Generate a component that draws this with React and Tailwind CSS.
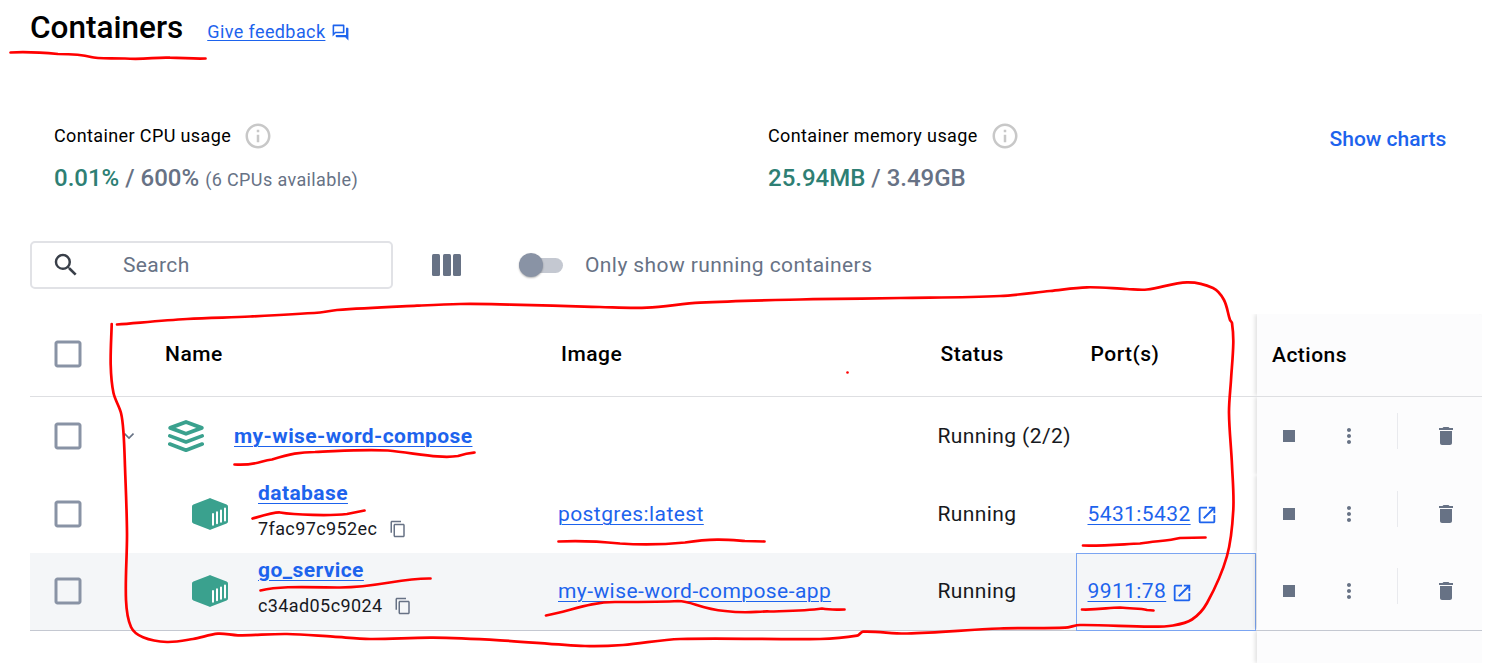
import React from "react";
import {
  MdSearch,
  MdOutlineQuestionAnswer,
  MdInfoOutline,
  MdOpenInNew,
  MdDelete,
  MdMoreVert,
  MdStop,
  MdContentCopy,
  MdCheckBoxOutlineBlank,
} from "react-icons/md";

function ComposeIcon() {
  return (
    <svg className="h-9 w-9 shrink-0" viewBox="0 0 36 36" fill="none" stroke="#3aa18e" strokeWidth="3.6" strokeLinejoin="round" strokeLinecap="round">
      <path d="M18 4 L33.800 9.900 L18 15.800 L2.200 9.900 Z" strokeWidth="3.800" />
      <path d="M1.800 17.900 L18 24 L34.200 17.900" />
      <path d="M1.800 26 L18 32.200 L34.200 26" />
    </svg>
  );
}

function ContainerIcon() {
  return (
    <svg className="h-9 w-9 shrink-0" viewBox="0 0 36 36">
      <path d="M17 2.4 Q18 1.8 19 2.4 L34.6 8.6 Q36 9.2 36 10.6 V25.4 Q36 26.8 34.6 27.4 L19 33.6 Q18 34.2 17 33.6 L1.4 27.4 Q0 26.8 0 25.4 V10.6 Q0 9.2 1.4 8.6 Z" fill="#3aa18e" />
      <path d="M21 18 V28.7 M25 16.2 V27.2 M29 14.4 V25.8 M33 12.6 V24.4" stroke="#fff" strokeWidth="2" strokeLinecap="round" />
    </svg>
  );
}

function Checkbox() {
  return (
    <div className="flex w-[76px] shrink-0 justify-center text-[#8993a5]">
      <MdCheckBoxOutlineBlank size={36} />
    </div>
  );
}

function Actions() {
  return (
    <div className="flex h-full w-[225px] shrink-0 items-center bg-[#fcfcfd] text-[#677285] shadow-[-2px_0_4px_rgba(0,0,0,0.12)] [clip-path:inset(0_0_0_-8px)]">
      <MdStop size={24} className="ml-5" />
      <MdMoreVert size={24} className="ml-9" />
      <div className="-mt-[11px] ml-9 h-9 w-px bg-[#e9eaee]" />
      <MdDelete size={24} className="ml-9" />
    </div>
  );
}

function ServiceRow({ name, id, image, port, active }) {
  return (
    <div className={active ? "flex h-[78px] items-center border-b border-[#c4c8d1] bg-[#f4f6f8]" : "flex h-[78px] items-center"}>
      <div className={active ? "flex flex-1 items-center pb-px" : "flex flex-1 items-center"}>
        <Checkbox />
        <div className="flex w-[452px] items-center pl-[86px]">
          <ContainerIcon />
          <div className="ml-[30px] pb-[7px]">
            <a className="block text-[21px] leading-[36px] font-bold tracking-[0.42px] text-[#1d63ed] underline decoration-1 underline-offset-[3px]">{name}</a>
            <div className="flex h-9 items-center text-[18px] tracking-[0.4px] text-[#17191e]">
              {id}
              <MdContentCopy size={18} className="ml-[11.500px] text-[#677285]" />
            </div>
          </div>
        </div>
        <div className="w-[379.500px] pt-[2px]">
          <a className="text-[21px] tracking-[0.42px] text-[#1d63ed] underline decoration-1 underline-offset-[3px]">{image}</a>
        </div>
        <div className="pt-[2px] text-[21px] tracking-[0.4px] text-[#17191e]">Running</div>
      </div>
      <div className={active ? "flex h-[78px] w-[180px] items-center border border-[#7ba5f2] pl-[10.500px]" : "flex w-[180px] items-center pl-[11.500px]"}>
        <a className={active ? "pt-px text-[21px] tracking-[0.4px] text-[#1d63ed] underline decoration-1 underline-offset-[3px]" : "pt-[2px] text-[21px] tracking-[0.4px] text-[#1d63ed] underline decoration-1 underline-offset-[3px]"}>{port}</a>
        <MdOpenInNew size={22} className="mt-[2px] ml-[5px] text-[#1d63ed]" />
      </div>
      <div className={active ? "ml-px h-full bg-[#fcfcfd] pb-px" : "ml-px h-full"}>
        <Actions />
      </div>
    </div>
  );
}

const OUTLINE = [
  [117, 324.5], [187, 319], [250, 316.5], [320, 312.5], [337, 310], [417, 305.7], [460, 304], [500, 304.3],
  [600, 307], [647, 307.6], [700, 302.7], [800, 299.500], [900, 298], [1000, 296], [1050, 291], [1087, 287.3], [1127, 289],
  [1147, 289.5], [1187, 282.3], [1213, 288], [1224, 300], [1230, 320], [1232, 323], [1233.3, 343], [1231, 380],
  [1229, 413], [1232, 465], [1233.3, 510], [1227, 556], [1207, 603], [1192, 619.5], [1173, 625.5], [1150, 626.7],
  [1080, 625], [1065, 627.7], [1000, 628.5], [907, 633.5], [863, 631.7], [857, 635.7], [820, 639], [680, 639],
  [623, 645], [585, 646], [500, 640.3], [433, 637.7], [370, 639], [333, 636.7], [287, 634], [238, 635.3],
  [218, 633.7], [193, 639], [167, 642], [143, 637.3], [131, 627], [126, 600], [127, 533], [125, 467],
  [123.5, 433], [121, 413], [113.5, 393], [110.7, 365], [111.7, 324],
];

// Catmull-Rom spline through the points, written as cubic segments.
function smoothPath(points) {
  let d = `M${points[0][0]} ${points[0][1]}`;
  for (let i = 0; i < points.length - 1; i++) {
    const p0 = points[i - 1] || points[i];
    const p1 = points[i];
    const p2 = points[i + 1];
    const p3 = points[i + 2] || p2;
    const span = Math.hypot(p2[0] - p1[0], p2[1] - p1[1]);
    const control = (from, to, at, sign) => {
      const len = Math.hypot(to[0] - from[0], to[1] - from[1]) || 1;
      return [at[0] + (sign * span * (to[0] - from[0])) / len / 3, at[1] + (sign * span * (to[1] - from[1])) / len / 3];
    };
    const a = control(p0, p2, p1, 1);
    const b = control(p1, p3, p2, -1);
    d += ` C${a[0]} ${a[1]} ${b[0]} ${b[1]} ${p2[0]} ${p2[1]}`;
  }
  return d;
}

function Annotations() {
  return (
    <svg className="pointer-events-none absolute inset-0" width="1500" height="663" viewBox="0 0 1500 663" fill="none" stroke="#ff0000" strokeWidth="2.7" strokeLinecap="round" strokeLinejoin="round">
      <path d="M10.500 52.500 C30 51.500 42 52.500 58 54 C72 54 84 55 91 57 C97 59 110 58 125 58.500 C145 60 155 57 170 57.700 C185 58 195 59 205.500 58.500" />
      <path d={smoothPath(OUTLINE)} />
      <path d="M234.500 464.500 C255 466 260 461 272 459.500 C290 454 300 452 315 452 C335 451.500 360 449 388 450.500 C415 453 440 459 458 456 C467 453 468 453 474.500 452.500" />
      <path d="M252.500 518.500 C265 515 275 512 280 512.500 C295 515 330 516 347 514 L364.500 510.500" />
      <path d="M260.500 590.500 C280 586 300 587 340 587.500 C380 587 400 578 430.500 578.500" />
      <path d="M558.500 541.500 C585 540 605 542 620 543.500 C640 545 665 544.500 685 542.500 C715 538 730 540 745 541 L764.500 541.500" />
      <path d="M546 615.500 C570 611 590 602 615 602 C640 602 665 602 678 601 C692 601 700 609 725 611 C750 614 755 611 770 611.500 C785 611 805 611 822 608.500 C830 610 835 609.500 844.500 609.500" />
      <path d="M1083 545.500 C1105 546 1125 544 1140 543.500 C1155 541 1168 541 1180 538 L1205.500 537.500" />
      <path d="M1082 609.500 C1100 610 1108 607.500 1120 607.500 C1132 609 1140 608 1147 610 L1153.500 610.500" />
      <circle cx="847.500" cy="372.500" r="1.300" fill="#ff0000" stroke="none" />
    </svg>
  );
}

export default function App() {
  return (
    <div className="relative h-[663px] w-[1500px] overflow-hidden bg-white font-['Roboto',sans-serif] text-black">
      <header className="flex h-[60px] items-start pl-[30px]">
        <h1 className="mt-[7px] text-[31.5px] leading-[42px] font-medium">Containers</h1>
        <a className="mt-[18px] ml-6 text-[18px] leading-[27px] tracking-[0.4px] text-[#1d63ed] underline decoration-1 underline-offset-[2px]">Give feedback</a>
        <MdOutlineQuestionAnswer size={19} className="mt-[23px] ml-[5.500px] text-[#1d63ed]" />
      </header>

      <section className="flex h-[181px] pt-[60px] pl-[54px]">
        <div className="w-[714px]">
          <div className="flex h-8 items-center text-[18px] tracking-[0.38px]">
            <span className="pb-[2px]">Container CPU usage</span>
            <MdInfoOutline size={30} className="ml-3 text-[#c8c8c8]" />
          </div>
          <div className="mt-2 flex h-[34px] items-baseline text-[24px] font-medium text-[#677285]">
            <span className="text-[#2e7f74]">0.01%</span>
            <span className="whitespace-pre"> / 600% </span>
            <span className="text-[18px] font-normal tracking-[0.38px]">(6 CPUs available)</span>
          </div>
        </div>
        <div className="w-[561.5px]">
          <div className="flex h-8 items-center text-[18px] tracking-[0.38px]">
            <span className="pb-[2px]">Container memory usage</span>
            <MdInfoOutline size={30} className="ml-3 text-[#c8c8c8]" />
          </div>
          <div className="mt-2 flex h-[34px] items-baseline text-[24px] font-medium text-[#677285]">
            <span className="text-[#2e7f74]">25.94MB</span>
            <span className="whitespace-pre"> / 3.49GB</span>
          </div>
        </div>
        <button className="mt-1 h-[30px] text-[21px] leading-[30px] font-medium whitespace-nowrap text-[#1d63ed]">Show charts</button>
      </section>

      <section className="flex h-12 items-center pl-[30px] text-[21px] text-[#677285]">
        <div className="flex h-12 w-[363px] items-center rounded-[5px] border-2 border-[#e1e2e6] pl-[19px]">
          <MdSearch size={30} className="text-[#393f49]" />
          <span className="ml-[42px] pt-[2px] tracking-[0.35px]">Search</span>
        </div>
        <div className="ml-[39px] flex h-[22px] w-[29px] justify-between">
          <div className="w-2 rounded-[1.5px] bg-[#677285]" />
          <div className="w-2 rounded-[1.5px] bg-[#677285]" />
          <div className="w-2 rounded-[1.5px] bg-[#677285]" />
        </div>
        <div className="ml-[58px] flex h-[15px] w-[44px] items-center rounded-full bg-[#c4c8d1]">
          <div className="h-6 w-6 shrink-0 rounded-full bg-[#8993a5] shadow-[0_1px_2px_rgba(0,0,0,0.3)]" />
        </div>
        <span className="ml-[22px] pt-[2px] tracking-[0.41px]">Only show running containers</span>
      </section>

      <section className="mt-[25px] ml-[30px] w-[1452px]">
        <div className="flex h-[83px] items-center border-b border-[#dedfe2] text-[21px] font-medium tracking-[0.48px]">
          <div className="pb-[2px]">
            <Checkbox />
          </div>
          <div className="w-[455px] pl-[59px]">Name</div>
          <div className="w-[379.500px]">Image</div>
          <div className="w-[150px]">Status</div>
          <div className="w-[166.500px]">Port(s)</div>
          <div className="flex h-full w-[225px] items-center rounded-tr bg-[#fcfcfd] pt-[2px] pl-[15px] shadow-[-2px_0_4px_rgba(0,0,0,0.12)] [clip-path:inset(0_0_0_-8px)]">Actions</div>
        </div>
        <div className="flex h-[78px] items-center">
          <Checkbox />
          <svg className="ml-[18px] h-2 w-[10px]" viewBox="0 0 10 8" fill="none" stroke="#677285" strokeWidth="1.600">
            <path d="M0.500 1.500 L5 6 L9.500 1.500" />
          </svg>
          <div className="flex w-[803.500px] items-center pl-[34px]">
            <ComposeIcon />
            <a className="ml-[30px] pt-[2px] text-[21px] font-bold tracking-[0.42px] text-[#1d63ed] underline decoration-1 underline-offset-[3px]">my-wise-word-compose</a>
          </div>
          <div className="w-[319.500px] pt-[2px] text-[21px] tracking-[0.4px] text-[#17191e]">Running (2/2)</div>
          <Actions />
        </div>
        <ServiceRow name="database" id="7fac97c952ec" image="postgres:latest" port="5431:5432" />
        <ServiceRow name="go_service" id="c34ad05c9024" image="my-wise-word-compose-app" port="9911:78" active />
        <div className="flex h-8 justify-end">
          <div className="h-8 w-[225px] bg-[#fcfcfd] shadow-[-2px_0_4px_rgba(0,0,0,0.12)] [clip-path:inset(0_0_0_-8px)]" />
        </div>
      </section>
      <Annotations />
    </div>
  );
}
